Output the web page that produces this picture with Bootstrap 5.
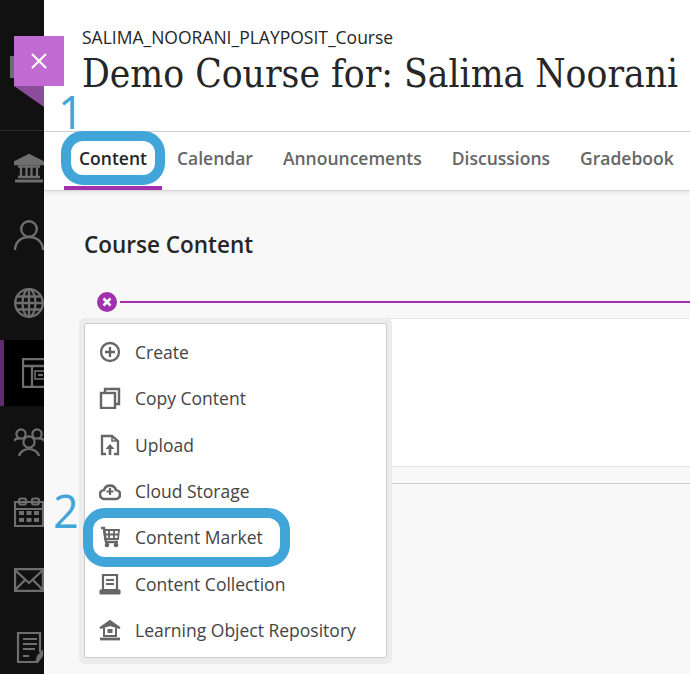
<!DOCTYPE html>
<html lang="en"><head><meta charset="utf-8"><title>Course</title>
<link href="https://cdn.jsdelivr.net/npm/bootstrap@5.3.0/dist/css/bootstrap.min.css" rel="stylesheet">
<style>
html,body{height:674px;overflow:hidden;margin:0}
body{font-family:"Open Sans",sans-serif;background:#f8f8f8;position:relative;color:#262626}
.rail{width:44px;height:674px;background:#111;flex:none;overflow:hidden}
.rail-top{height:131px;border-bottom:1px solid #2a2a2a;flex:none}
.rail-item{height:66px;width:44px;overflow:hidden;padding-left:14px;display:flex;align-items:center;flex:none;color:#6e6e6e}
.rail-item svg{flex:none;display:block}
.rail-item.on{background:#000;border-left:4px solid #5f2d6e;padding-left:18px}
.mainp{min-width:0;flex:1}
.head{background:#fff;height:131px;padding:27px 0 0 38px;overflow:hidden}
.crs{font-size:17.500px;line-height:20px;color:#262626}
.ttl{font-family:"DejaVu Serif Condensed","DejaVu Serif",serif;font-stretch:condensed;font-size:38.600px;line-height:44px;margin:5px 0 0;color:#262626;white-space:nowrap;font-weight:400}
.tabs{background:#fff;height:60px;border-top:1px solid #cdcdcd;border-bottom:1px solid #d6d6d6;box-shadow:0 2px 4px rgba(0,0,0,.08);padding-left:20px}
.tabx{font-size:17.500px;font-weight:600;color:#666;padding:0 15px;line-height:53px;height:58px;white-space:nowrap}
.tabx.on{color:#262626;border-bottom:4px solid #a12fae;width:98px;text-align:center;padding:0}
.pane{padding-top:40px}
.cc{font-size:22.500px;font-weight:600;line-height:28px;margin:0 0 0 40px;color:#262626}
.addline{height:2px;background:#a12fae;margin:42px 0 0 76px}
.sheet{background:#fff;height:149px;border-top:1px solid #e5e5e5;border-bottom:1px solid #e5e5e5;margin:15px 0 0 41px}
.sheet2{border-top:1px solid #cdcdcd;margin:16px 0 0 41px}
.plus{position:absolute;left:97px;top:292px;width:20px;height:20px;border-radius:50%;background:#a12fae;display:flex;align-items:center;justify-content:center}
.closebox{position:absolute;left:14px;top:36px;width:50px;height:50px;background:#c16ad1;display:flex;align-items:center;justify-content:center}
.fold{position:absolute;left:14px;top:86px;width:30px;height:21px;background:#8b4d9b;clip-path:polygon(0 0,100% 0,100% 100%)}
.stub{position:absolute;left:10px;top:56px;width:4px;height:22px;background:#6e6e6e}
.menuwrap{position:absolute;left:79px;top:318px;width:313px;height:346px;background:#ececec;border-radius:6px;padding:5px 5px 6px 5px}
.menubox{background:#fff;height:100%;border:1px solid #cdcdcd;border-radius:2px;padding:5px 0 0}
.mi{display:flex;align-items:center;height:46.300px;padding:0 0 0 14px;font-size:17.500px;color:#444;white-space:nowrap;gap:14px}
.mi svg{flex:none;width:22px;height:22px;color:#666}
.ring{position:absolute;border:10px solid #41a5d9;pointer-events:none;border-radius:22px}
.ring1{left:61px;top:131px;width:104px;height:54px}
.ring2{left:83px;top:508px;width:207px;height:59px}
.num{position:absolute;color:#41a5d9;font-size:45px;line-height:50px;font-weight:400}
.n1{left:58px;top:87px}
.n2{left:53px;top:486px}
</style></head>
<body>
<div class="d-flex">
 <nav class="rail d-flex flex-column">
  <div class="rail-top"></div>
  <div class="rail-item" style="height:74px"><svg width="30" height="30" viewBox="0 0 30 30" fill="none" stroke="currentColor" stroke-width="2.300"><path d="M1 9 15 2l14 7v2H1z" fill="currentColor"/><path d="M4 13.500h22M7 13v10M12.500 13v10M17.500 13v10M23 13v10M4 24h22"/><path d="M1 28h28" stroke-width="3"/></svg></div>
  <div class="rail-item" style="height:60px"><svg width="30" height="30" viewBox="0 0 30 30" fill="none" stroke="currentColor" stroke-width="2.400"><circle cx="15" cy="9" r="7.800"/><path d="M1 30c0-8 6-13 14-13s14 5 14 13"/></svg></div>
  <div class="rail-item" style="height:75px"><svg width="30" height="30" viewBox="0 0 30 30" fill="none" stroke="currentColor" stroke-width="2.300"><circle cx="15" cy="15" r="13.800"/><ellipse cx="15" cy="15" rx="6.500" ry="13.800"/><path d="M15 1v28M1 15h28M3 8.500h24M3 21.500h24"/></svg></div>
  <div class="rail-item on"><svg width="30" height="30" viewBox="0 0 30 30" fill="none" stroke="currentColor" stroke-width="2.300"><path d="M1 1h28v28H1zM1 8h28M10 8v21"/><rect x="13" y="13" width="11" height="8" stroke-width="1.600"/><path d="M16 17h5"/></svg></div>
  <div class="rail-item" style="height:72px"><svg width="30" height="30" viewBox="0 0 30 30" fill="none" stroke="currentColor" stroke-width="2.200"><circle cx="7" cy="7" r="4.600"/><circle cx="23" cy="7" r="4.600"/><circle cx="15" cy="15" r="5.600"/><path d="M0 14c1-2 3-3 5-2M30 14c-1-2-3-3-5-2M5 29c1-4 5-7 10-7s9 3 10 7"/></svg></div>
  <div class="rail-item" style="height:67px"><svg width="30" height="30" viewBox="0 0 30 30" fill="none" stroke="currentColor" stroke-width="2.200"><path d="M1 5h28v24H1zM1 12h28"/><rect x="5" y="1.500" width="7" height="6" rx="2"/><rect x="18" y="1.500" width="7" height="6" rx="2"/><g fill="currentColor" stroke="none"><rect x="5" y="14" width="5" height="4"/><rect x="12.500" y="14" width="5" height="4"/><rect x="20" y="14" width="5" height="4"/><rect x="5" y="21" width="5" height="4"/><rect x="12.500" y="21" width="5" height="4"/><rect x="20" y="21" width="5" height="4"/></g></svg></div>
  <div class="rail-item" style="height:70px"><svg width="30" height="24" viewBox="0 0 30 24" fill="none" stroke="currentColor" stroke-width="2.300"><path d="M1 1h28v22H1zM1 2l14 13L29 2M1 22l10-10M29 22 19 12"/></svg></div>
  <div class="rail-item" style="padding-left:16px"><svg width="28" height="32" viewBox="0 0 28 32" fill="none" stroke="currentColor" stroke-width="2.200"><path d="M20 30H2V1h22v19"/><path d="M7 7h14M7 12h14M7 17h12M7 24h6"/><path d="M19 31l2-7 6-7v7l-5 7z" fill="currentColor" stroke="none"/></svg></div>
 </nav>
 <main class="mainp">
  <header class="head">
   <div class="crs">SALIMA_NOORANI_PLAYPOSIT_Course</div>
   <h1 class="ttl">Demo Course for: Salima Noorani</h1>
  </header>
  <div class="tabs d-flex">
   <div class="tabx on">Content</div>
   <div class="tabx">Calendar</div>
   <div class="tabx">Announcements</div>
   <div class="tabx">Discussions</div>
   <div class="tabx">Gradebook</div>
  </div>
  <section class="pane">
   <h2 class="cc">Course Content</h2>
   <div class="addline"></div>
   <div class="sheet"></div>
   <div class="sheet2"></div>
  </section>
 </main>
</div>
<div class="stub"></div>
<div class="fold"></div>
<div class="closebox"><svg width="18" height="18" viewBox="0 0 18 18" stroke="#fff" stroke-width="2.200"><path d="M2 2l14 14M16 2 2 16"/></svg></div>
<div class="plus"><svg width="10" height="10" viewBox="0 0 10 10" stroke="#fff" stroke-width="2.600"><path d="M1.500 1.500l7 7M8.500 1.500l-7 7"/></svg></div>
<div class="menuwrap"><div class="menubox">
 <div class="mi"><svg viewBox="0 0 22 22" fill="none" stroke="currentColor" stroke-width="2.300"><circle cx="11" cy="11" r="9"/><path d="M11 6v10M6 11h10"/></svg>Create</div>
 <div class="mi"><svg viewBox="0 0 22 22" fill="none" stroke="currentColor" stroke-width="2.400"><rect x="2" y="6" width="14" height="15"/><path d="M6 6V2h14v15h-4"/></svg>Copy Content</div>
 <div class="mi"><svg viewBox="0 0 22 22" fill="none" stroke="currentColor" stroke-width="2.300"><path d="M7 20H3V2h10l6 5v13h-4"/><path d="M11 21v-8" stroke-width="2.600"/><path d="M6.500 15l4.500-5 4.500 5z" fill="currentColor" stroke="none"/><path d="M13 2v5h6" stroke-width="1.500"/></svg>Upload</div>
 <div class="mi"><svg viewBox="0 0 22 22" fill="none" stroke="currentColor" stroke-width="2.600"><path d="M6 19a4.500 4.500 0 0 1-1-9 6.300 6.300 0 0 1 12 0 4.500 4.500 0 0 1-1 9z"/><path d="M11 8v7M7.500 11.500h7" stroke-width="2.200"/></svg>Cloud Storage</div>
 <div class="mi"><svg viewBox="0 0 22 22" fill="none" stroke="currentColor" stroke-width="2"><path d="M2 2h3l2 14h12" stroke-width="2.400"/><path d="M5 4h15l-1 9H6zM10 4v9M15 4v9M6 8.500h14" stroke-width="1.800"/><circle cx="8" cy="19" r="2.300" fill="currentColor" stroke="none"/><circle cx="17" cy="19" r="2.300" fill="currentColor" stroke="none"/></svg>Content Market</div>
 <div class="mi"><svg viewBox="0 0 22 22" fill="none" stroke="currentColor" stroke-width="2.200"><path d="M4 2h14v15H4z"/><path d="M7 7h8M7 11h8" stroke-width="2"/><path d="M1 17h20v4H1z" fill="currentColor" stroke-width="1"/></svg>Content Collection</div>
 <div class="mi"><svg viewBox="0 0 22 22" fill="none" stroke="currentColor" stroke-width="2"><path d="M1 9l10-7 10 7-10-3z" fill="currentColor"/><path d="M5 9v8h12V9"/><rect x="8.500" y="10" width="5" height="4" fill="currentColor" stroke="none"/><path d="M1 20h20" stroke-width="2.800"/></svg>Learning Object Repository</div>
</div></div>
<div class="ring ring1"></div>
<div class="ring ring2"></div>
<div class="num n1">1</div>
<div class="num n2">2</div>
</body></html>
